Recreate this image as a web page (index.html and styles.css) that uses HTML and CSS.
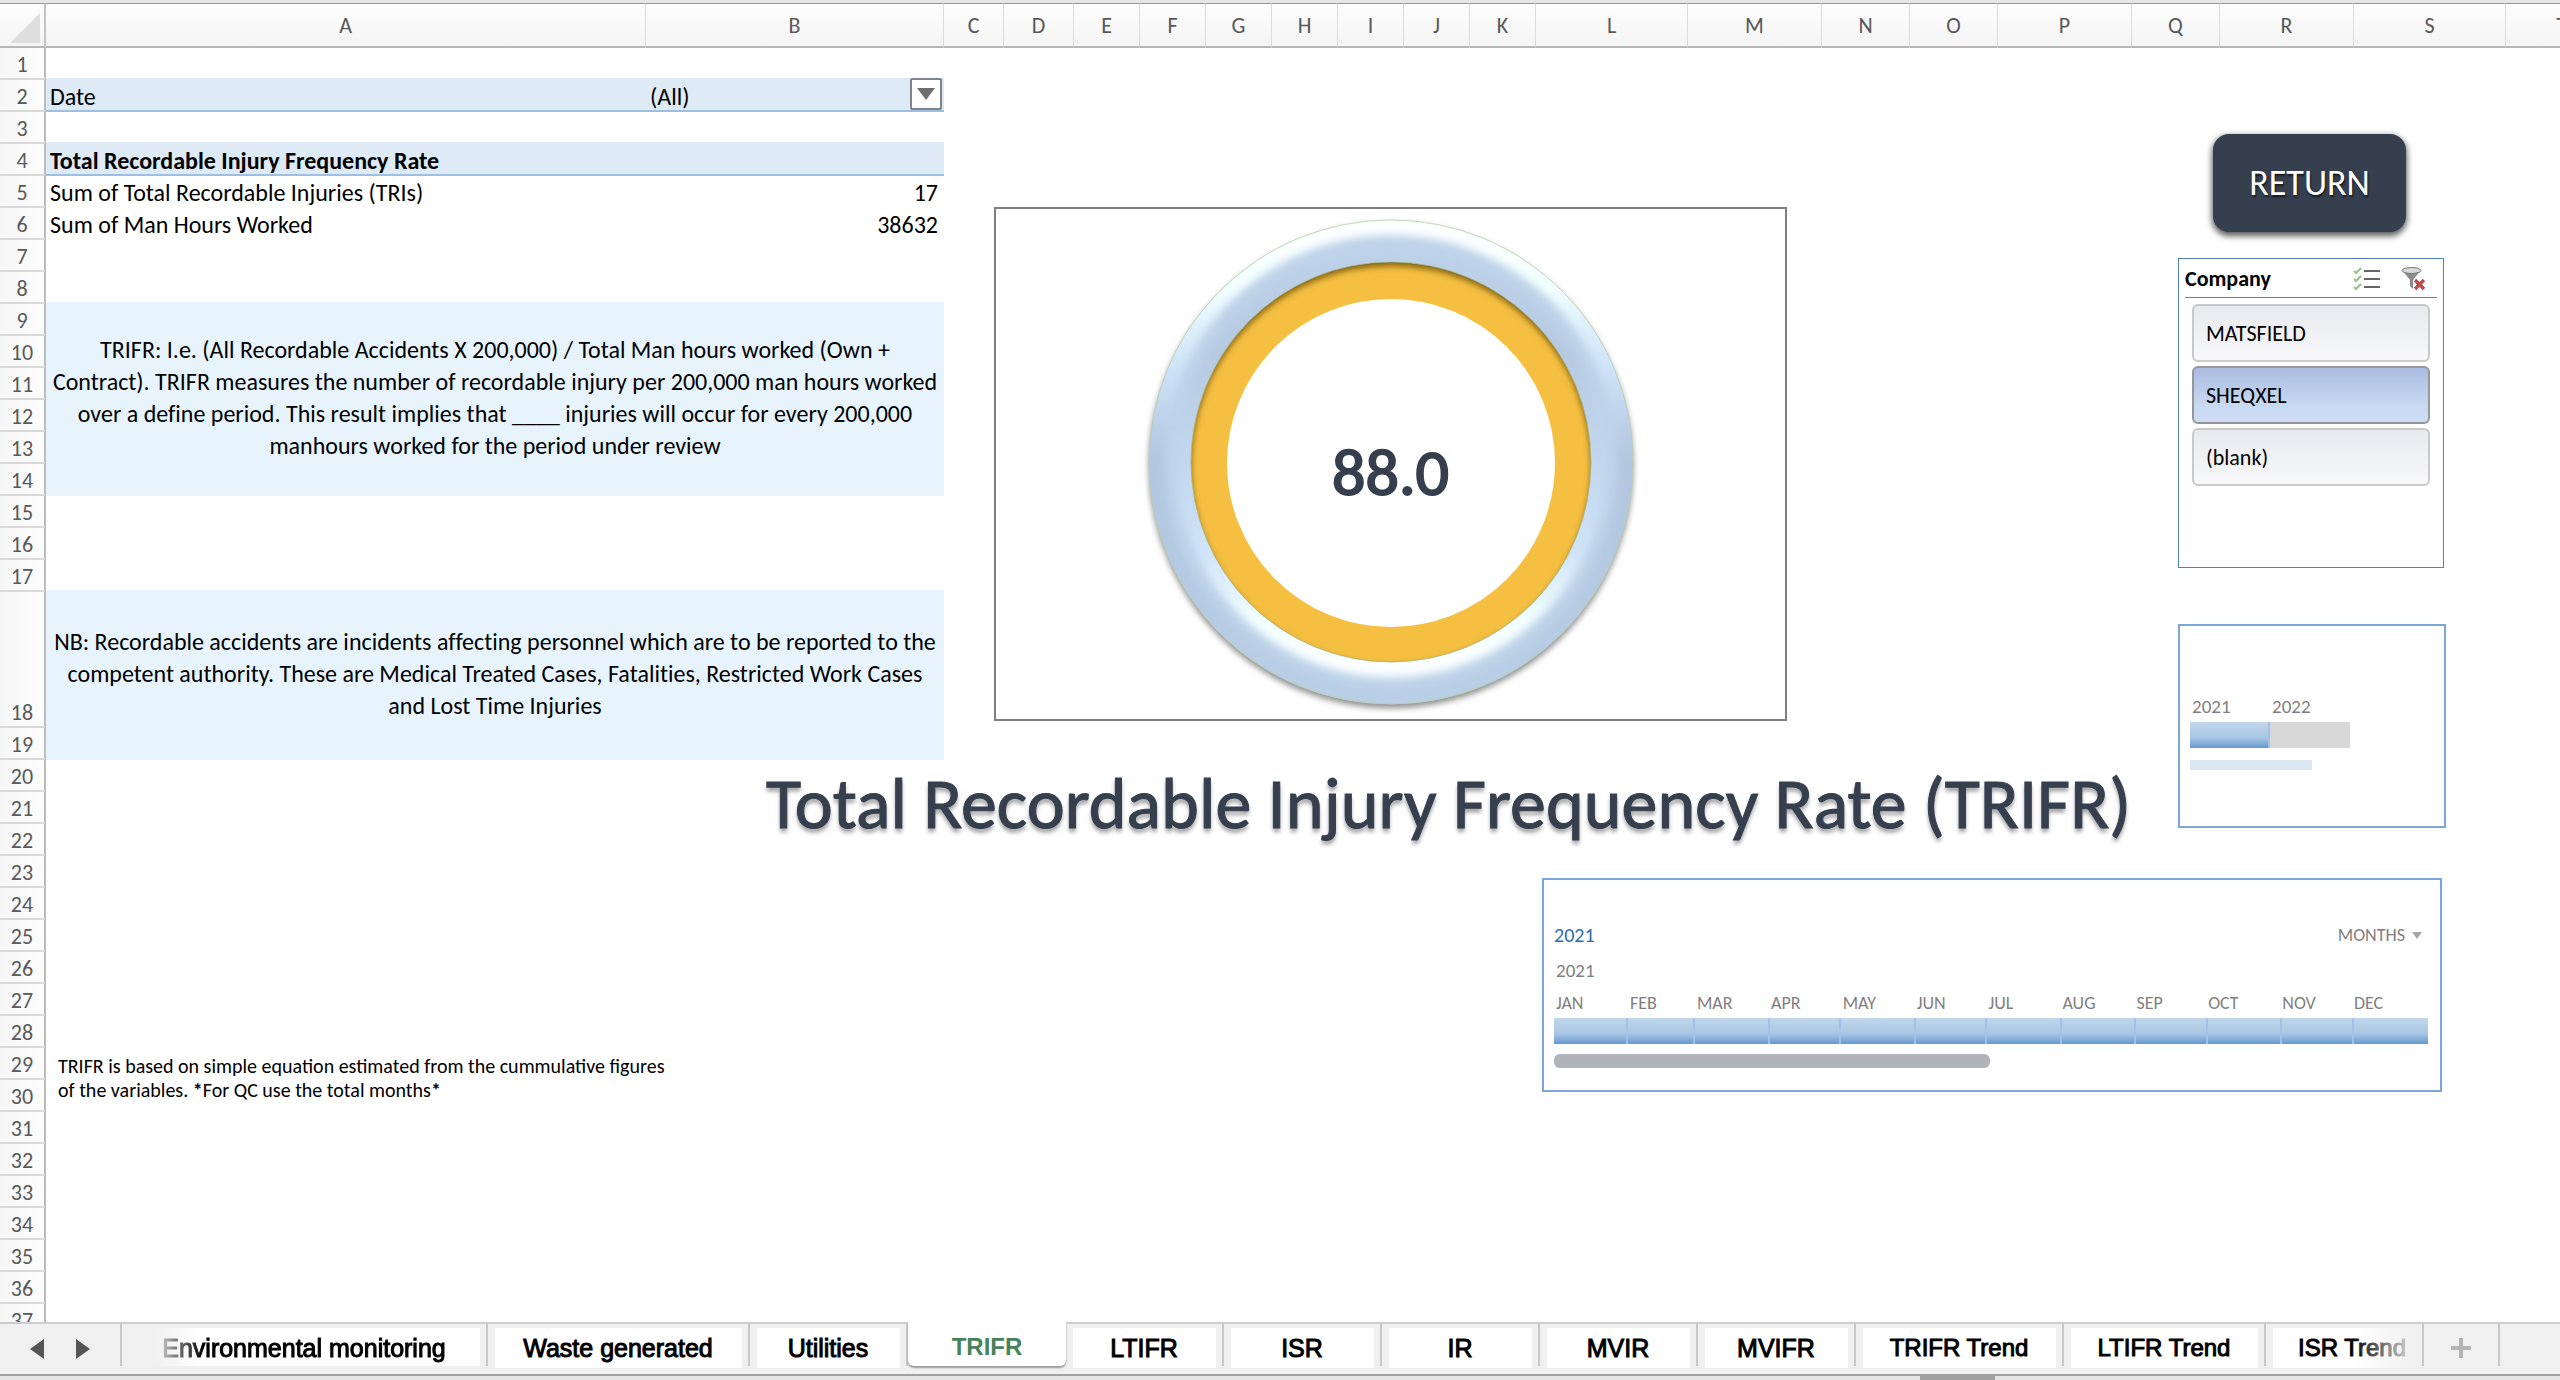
FILE: index.html
```html
<!DOCTYPE html>
<html lang="en">
<head>
<meta charset="utf-8">
<title>TRIFR</title>
<link rel="stylesheet" href="styles.css">
</head>
<body>
<main class="sheet">
  <table class="grid">
    <colgroup>
      <col class="w-head"><col class="w-a"><col class="w-b"><col class="w-c"><col class="w-d"><col class="w-s"><col class="w-s"><col class="w-s"><col class="w-s"><col class="w-s"><col class="w-s"><col class="w-s"><col class="w-xl"><col class="w-l"><col class="w-m"><col class="w-m"><col class="w-l"><col class="w-m"><col class="w-l"><col class="w-xl"><col class="w-t">
    </colgroup>
    <thead>
      <tr>
        <th class="corner"><svg width="44" height="40" viewBox="0 0 44 40"><path d="M40 8V38H10Z" fill="#dedede"/></svg></th>
        <th>A</th><th>B</th><th>C</th><th>D</th><th>E</th><th>F</th><th>G</th><th>H</th><th>I</th><th>J</th><th>K</th><th>L</th><th>M</th><th>N</th><th>O</th><th>P</th><th>Q</th><th>R</th><th>S</th><th>T</th>
      </tr>
    </thead>
    <tbody>
      <tr class="first"><th>1</th><td colspan="20"></td></tr>
      <tr><th>2</th><td class="pivot">Date</td><td class="pivot"><div class="filter">(All)<button class="drop" aria-label="Filter by date"><svg width="18" height="14" viewBox="0 0 18 14"><path d="M0 1H18L9 13Z" fill="#6f6f6f"/></svg></button></div></td><td colspan="18"></td></tr>
      <tr><th>3</th><td colspan="20"></td></tr>
      <tr><th>4</th><td class="pivot strong" colspan="2">Total Recordable Injury Frequency Rate</td><td colspan="18"></td></tr>
      <tr><th>5</th><td>Sum of Total Recordable Injuries (TRIs)</td><td class="num">17</td><td colspan="18"></td></tr>
      <tr><th>6</th><td>Sum of Man Hours Worked</td><td class="num">38632</td><td colspan="18"></td></tr>
      <tr><th>7</th><td colspan="20"></td></tr>
      <tr><th>8</th><td colspan="20"></td></tr>
      <tr><th>9</th><td class="memo" colspan="2" rowspan="6">TRIFR: I.e. (All Recordable Accidents X 200,000) / Total Man hours worked (Own +<br>Contract). TRIFR measures the number of recordable injury per 200,000 man hours worked<br>over a define period. This result implies that ____ injuries will occur for every 200,000<br>manhours worked for the period under review</td><td colspan="18"></td></tr>
      <tr><th>10</th><td colspan="18"></td></tr>
      <tr><th>11</th><td colspan="18"></td></tr>
      <tr><th>12</th><td colspan="18"></td></tr>
      <tr><th>13</th><td colspan="18"></td></tr>
      <tr><th>14</th><td colspan="18"></td></tr>
      <tr><th>15</th><td colspan="20"></td></tr>
      <tr><th>16</th><td colspan="20"></td></tr>
      <tr><th>17</th><td colspan="20"></td></tr>
      <tr class="tall"><th>18</th><td class="memo" colspan="2" rowspan="2">NB: Recordable accidents are incidents affecting personnel which are to be reported to the<br>competent authority. These are Medical Treated Cases, Fatalities, Restricted Work Cases<br>and Lost Time Injuries</td><td colspan="18"></td></tr>
      <tr><th>19</th><td colspan="18"></td></tr>
      <tr><th>20</th><td colspan="20"></td></tr>
      <tr><th>21</th><td colspan="20"></td></tr>
      <tr><th>22</th><td colspan="20"></td></tr>
      <tr><th>23</th><td colspan="20"></td></tr>
      <tr><th>24</th><td colspan="20"></td></tr>
      <tr><th>25</th><td colspan="20"></td></tr>
      <tr><th>26</th><td colspan="20"></td></tr>
      <tr><th>27</th><td colspan="20"></td></tr>
      <tr><th>28</th><td colspan="20"></td></tr>
      <tr><th>29</th><td colspan="20"></td></tr>
      <tr><th>30</th><td colspan="20"></td></tr>
      <tr><th>31</th><td colspan="20"></td></tr>
      <tr><th>32</th><td colspan="20"></td></tr>
      <tr><th>33</th><td colspan="20"></td></tr>
      <tr><th>34</th><td colspan="20"></td></tr>
      <tr><th>35</th><td colspan="20"></td></tr>
      <tr><th>36</th><td colspan="20"></td></tr>
      <tr><th>37</th><td colspan="20"></td></tr>
    </tbody>
  </table>

  <!-- Objects floating over the cells -->
  <figure class="object chart">
    <svg width="789" height="510" viewBox="996 209 789 510">
      <defs>
        <linearGradient id="hiOut" gradientUnits="userSpaceOnUse" x1="0" y1="220" x2="0" y2="704"><stop offset="0" stop-color="#fff"/><stop offset=".14" stop-color="#f2ffff"/><stop offset=".3" stop-color="#d4e8fd" stop-opacity=".8"/><stop offset=".5" stop-color="#abc0da" stop-opacity=".7"/><stop offset=".75" stop-color="#aec4de" stop-opacity=".6"/><stop offset="1" stop-color="#b4cbe3" stop-opacity=".5"/></linearGradient>
        <linearGradient id="hiIn" gradientUnits="userSpaceOnUse" x1="0" y1="680" x2="0" y2="245"><stop offset="0" stop-color="#fff"/><stop offset=".14" stop-color="#f2ffff"/><stop offset=".3" stop-color="#d4e8fd" stop-opacity=".8"/><stop offset=".5" stop-color="#c6dbf2" stop-opacity=".5"/><stop offset=".75" stop-color="#b0c4dc" stop-opacity=".6"/><stop offset="1" stop-color="#bcd2e8" stop-opacity=".5"/></linearGradient>
        <filter id="soft" x="-10%" y="-10%" width="120%" height="120%" color-interpolation-filters="sRGB"><feGaussianBlur stdDeviation="4"/></filter>
        <filter id="drop" x="-10%" y="-10%" width="120%" height="120%"><feGaussianBlur stdDeviation="3"/></filter>
        <clipPath id="ring"><path clip-rule="evenodd" d="M1149 462a242 242 0 1 0 484 0a242 242 0 1 0 -484 0ZM1191 462a200 200 0 1 0 400 0a200 200 0 1 0 -400 0Z"/></clipPath>
        <clipPath id="disc"><circle cx="1391" cy="462" r="200"/></clipPath>
      </defs>
      <circle cx="1391" cy="466" r="221" fill="none" stroke="#000" stroke-opacity=".45" stroke-width="42" filter="url(#drop)"/>
      <circle cx="1391" cy="463" r="182" fill="#fff" stroke="#f5c042" stroke-width="36"/>
      <g clip-path="url(#disc)"><circle cx="1391" cy="466" r="207" fill="none" stroke="#6b4c00" stroke-opacity=".8" stroke-width="14" filter="url(#drop)"/></g>
      <g clip-path="url(#ring)">
        <circle cx="1391" cy="462" r="221" fill="none" stroke="#bfd4ea" stroke-width="44"/>
        <circle cx="1391" cy="462" r="246" fill="none" stroke="url(#hiOut)" stroke-width="38" filter="url(#soft)"/>
        <circle cx="1391" cy="462" r="196" fill="none" stroke="url(#hiIn)" stroke-width="38" filter="url(#soft)"/>
      </g>
      <circle cx="1391" cy="462" r="242" fill="none" stroke="#b9cfaa" stroke-opacity=".8"/>
      <circle cx="1391" cy="462" r="200" fill="none" stroke="#a9b47a" stroke-opacity=".8"/>
    </svg>
    <figcaption class="value">88.0</figcaption>
  </figure>

  <h1 class="object title">Total Recordable Injury Frequency Rate (TRIFR)</h1>

  <p class="object note">TRIFR is based on simple equation estimated from the cummulative figures<br>of the variables. <b>*</b>For QC use the total months<b>*</b></p>

  <button class="object return">RETURN</button>

  <section class="object slicer">
    <header class="slicer-head">
      <h2>Company</h2>
      <button class="icon" aria-label="Multi-select"><svg width="28" height="24" viewBox="0 0 28 24" fill="none"><path d="M1 4l2 2 5-5M1 12l2 2 5-5M1 20l2 2 5-5" stroke="#93c47d" stroke-width="2"/><path d="M11 4H27M11 12H27M11 20H27" stroke="#333" stroke-width="1.6"/></svg></button>
      <button class="icon" aria-label="Clear filter"><svg width="26" height="24" viewBox="0 0 26 24"><path d="M1 3L9 13V19L12 22V13L20 3Z" fill="#8b8b8b"/><ellipse cx="10.500" cy="3.500" rx="9.500" ry="3" fill="#d8d8d8" stroke="#777"/><path d="M14 13l9 9M23 13l-9 9" stroke="#bf4a4a" stroke-width="3.400"/></svg></button>
    </header>
    <div class="slicer-items">
      <button class="item">MATSFIELD</button>
      <button class="item on">SHEQXEL</button>
      <button class="item">(blank)</button>
    </div>
  </section>

  <section class="object years">
    <div class="years-labels"><span>2021</span><span>2022</span></div>
    <div class="years-bar"><i class="sel"></i><i class="unsel"></i></div>
    <div class="years-scroll"></div>
  </section>

  <section class="object timeline">
    <header class="tl-head"><span class="tl-range">2021</span><button class="tl-level">MONTHS <svg width="10" height="7" viewBox="0 0 10 7"><path d="M0 0H10L5 7Z" fill="#a6a6a6"/></svg></button></header>
    <div class="tl-year">2021</div>
    <div class="months labels"><span>JAN</span><span>FEB</span><span>MAR</span><span>APR</span><span>MAY</span><span>JUN</span><span>JUL</span><span>AUG</span><span>SEP</span><span>OCT</span><span>NOV</span><span>DEC</span></div>
    <div class="months bar"><i></i><i></i><i></i><i></i><i></i><i></i><i></i><i></i><i></i><i></i><i></i><i></i></div>
    <div class="tl-scroll"></div>
  </section>
</main>

<nav class="tabs">
  <div class="arrows">
    <button aria-label="Previous sheet"><svg width="14" height="20" viewBox="0 0 14 20"><path d="M14 0V20L0 10Z" fill="#555"/></svg></button>
    <button aria-label="Next sheet"><svg width="14" height="20" viewBox="0 0 14 20"><path d="M0 0V20L14 10Z" fill="#555"/></svg></button>
  </div>
  <a class="tab t-env" href="#env">Environmental monitoring</a>
  <a class="tab t-waste" href="#waste">Waste generated</a>
  <a class="tab" href="#utilities">Utilities</a>
  <a class="tab active" href="#trifr">TRIFR</a>
  <a class="tab" href="#ltifr">LTIFR</a>
  <a class="tab" href="#isr">ISR</a>
  <a class="tab" href="#ir">IR</a>
  <a class="tab" href="#mvir">MVIR</a>
  <a class="tab" href="#mvifr">MVIFR</a>
  <a class="tab t-trend" href="#trifr-trend">TRIFR Trend</a>
  <a class="tab t-trend2" href="#ltifr-trend">LTIFR Trend</a>
  <a class="tab t-last" href="#isr-trend">ISR Trend</a>
  <button class="add" aria-label="Add sheet"><svg width="20" height="20" viewBox="0 0 20 20"><path d="M10 0V20M0 10H20" stroke="#b3b3b3" stroke-width="4"/></svg></button>
</nav>
<div class="status"><div class="thumb"></div></div>
</body>
</html>
```
FILE: styles.css
```css
* { box-sizing: border-box; }

body {
  margin: 0;
  height: 100vh;
  display: flex;
  flex-direction: column;
  overflow: hidden;
  background: #fff;
  color: #000;
  font-family: Calibri, Carlito, Lato, sans-serif;
  font-size: 22px;
}

button { font: inherit; color: inherit; border: 0; background: none; padding: 0; }
h1, h2, p, figure { margin: 0; }

.sheet {
  position: relative;
  flex: 1;
  min-height: 0;
  overflow: hidden;
  border-top: 3px solid #e6e6e6;
}

/* Cells */
.grid { table-layout: fixed; border-collapse: separate; border-spacing: 0; width: 2618px; line-height: 26px; font-variant-ligatures: none; }
.w-head { width: 46px; }
.w-a { width: 600px; }
.w-b { width: 298px; }
.w-c { width: 60px; }
.w-d { width: 70px; }
.w-s { width: 66px; }
.w-m { width: 88px; }
.w-l { width: 134px; }
.w-xl { width: 152px; }
.w-t { width: 112px; }

.grid th { font-weight: 400; color: #595959; padding: 0; }
.grid thead th {
  height: 45px;
  padding-top: 2px;
  border-top: 1px solid #999;
  border-bottom: 2px solid #b7b7b7;
  border-right: 1px solid #dcdcdc;
  background: linear-gradient(#fdfdfd, #f5f5f5);
}
.grid thead .corner { border-right: 2px solid #c4c4c4; line-height: 0; padding: 0; }
tbody tr { height: 32px; }
tbody .first { height: 30px; }
tbody .tall { height: 136px; }
tbody th {
  border-right: 2px solid #bcbcbc;
  border-top: 2px solid #dadada;
  background: linear-gradient(90deg, #f6f6f6, #fdfdfd);
  vertical-align: bottom;
}
tbody .first th { border-top: 0; }
tbody td { padding: 4px 6px 0 4px; height: 30px; vertical-align: bottom; white-space: nowrap; font-size: 24px; }
td.pivot { background: #deeaf6; box-shadow: 0 2px #9dbfe4; }
td.strong { font-weight: 700; }
td.num { text-align: right; }
td.memo { background: #e7f4fe; box-shadow: 0 2px #e7f4fe; text-align: center; vertical-align: middle; line-height: 32px; padding: 0; }
.filter { position: relative; }
.drop {
  position: absolute;
  right: -4px;
  bottom: 0;
  width: 32px;
  height: 32px;
  border: 2px solid #808488;
  border-radius: 2px;
  background: #fff;
  display: grid;
  place-items: center;
}

/* Floating objects */
.object { position: absolute; }
.chart { left: 994px; top: 204px; width: 793px; height: 514px; border: 2px solid #7f7f7f; background: #fff; }
.chart svg { display: block; }
.value {
  position: absolute;
  inset: 16px 0 0;
  display: grid;
  place-items: center;
  color: #363f4e;
  font-size: 66px;
  -webkit-text-stroke: 2px #363f4e;
}
.title {
  left: 766px;
  top: 756px;
  font-size: 72px;
  line-height: 88px;
  font-weight: 400;
  font-variant-ligatures: none;
  color: #363f4e;
  white-space: nowrap;
  -webkit-text-stroke: 1px #363f4e;
  text-shadow: 0 4px 4px rgba(0, 0, 0, .4);
}
.note { left: 58px; top: 1051px; font-size: 20px; line-height: 24px; white-space: nowrap; }

.return {
  left: 2213px;
  top: 131px;
  width: 193px;
  height: 98px;
  border-radius: 16px;
  background: #363f4e;
  color: #fff;
  font-size: 36px;
  text-shadow: 1px 2px 2px rgba(0, 0, 0, .6);
  box-shadow: 0 3px 6px 1px rgba(0, 0, 0, .65);
}

.slicer { left: 2178px; top: 255px; width: 266px; height: 310px; border: 1px solid #4f81bd; background: #fff; padding: 0 6px; }
.slicer-head { display: flex; align-items: center; gap: 20px; height: 39px; border-bottom: 1px solid #4f81bd; padding: 2px 10px 0 0; }
.slicer-head h2 { flex: 1; font-size: 22px; line-height: 28px; }
.icon { line-height: 0; }
.slicer-items { display: flex; flex-direction: column; gap: 4px; padding: 6px 7px 0; }
.item {
  height: 58px;
  border: 2px solid #c9c9c9;
  border-radius: 6px;
  background: linear-gradient(#e9eaed, #f8f8fb);
  text-align: left;
  padding: 0 0 0 12px;
}
.item.on { border-color: #979797; background: linear-gradient(#a9bce0, #c8d9f2 70%, #ccddf4); }

.years { left: 2178px; top: 621px; width: 268px; height: 204px; border: 2px solid #7ba8da; background: #fff; padding: 69px 10px 0; color: #7f7f7f; font-size: 19px; line-height: 24px; }
.years-labels { display: grid; grid-template-columns: 80px 80px; padding-left: 2px; }
.years-bar { display: grid; grid-template-columns: 80px 80px; height: 26px; margin-top: 3px; }
.sel { border-right: 2px solid #a3c1e6; background: linear-gradient(#c1d7ec, #a9c6e3 60%, #6699d0); }
.unsel { background: #d8d8d8; }
.years-scroll { width: 122px; height: 10px; margin-top: 12px; background: #dae6f2; }

.timeline { left: 1542px; top: 875px; width: 900px; height: 214px; border: 2px solid #7ba8da; background: #fff; padding: 43px 12px 0 10px; color: #7f7f7f; font-size: 18px; line-height: 24px; }
.tl-head { display: flex; justify-content: space-between; padding-right: 6px; }
.tl-range { color: #2e6db4; font-size: 20px; }
.tl-level { display: flex; align-items: center; gap: 7px; }
.tl-year { padding: 12px 2px 8px; font-size: 19px; }
.months { display: grid; grid-template-columns: 31fr 28fr 31fr 30fr 31fr 30fr 31fr 31fr 30fr 31fr 30fr 31fr; }
.labels { padding-left: 2px; }
.bar { height: 26px; margin-top: 3px; background: linear-gradient(#c1d7ec, #a9c6e3 60%, #6699d0); }
.bar i { border-right: 2px solid #a3c1e6; }
.bar i:last-child { border-right: 0; }
.tl-scroll { width: 436px; height: 14px; margin-top: 10px; border-radius: 6px; background: #b0b3b7; }

/* Sheet tabs */
.tabs {
  display: flex;
  height: 52px;
  flex: none;
  border-top: 2px solid #cdcdcd;
  background: #f0f0f0;
  font-family: "Liberation Sans", Arial, sans-serif;
  font-size: 25px;
}
.arrows { width: 122px; height: 42px; display: flex; gap: 32px; align-items: center; padding: 8px 0 0 30px; border-right: 2px solid #c8c8c8; }
.arrows button { line-height: 0; }
.tab {
  width: 158px;
  height: 42px;
  border-right: 2px solid #c8c8c8;
  color: #000;
  text-decoration: none;
  display: flex;
  position: relative;
  z-index: 0;
  align-items: center;
  justify-content: center;
  padding-top: 6px;
  white-space: nowrap;
  -webkit-text-stroke: 1px;
}
.tab::before { content: ""; position: absolute; inset: 4px 6px -2px 7px; background: #fff; z-index: -1; }
.t-env { width: 366px; -webkit-mask-image: linear-gradient(90deg, transparent 8%, #000 22%); }
.t-waste { width: 262px; }
.t-trend { width: 208px; font-size: 24px; }
.t-trend2 { width: 202px; font-size: 24px; }
.t-last { padding-left: 16px; font-size: 24px; }
.t-last::after { content: ""; position: absolute; inset: 4px 0 -2px 50%; background: linear-gradient(90deg, transparent 10%, #f0f0f0 95%); }
.tab.active {
  height: 44px;
  margin-top: -2px;
  background: #fff;
  color: #47825a;
  font-size: 24px;
  font-weight: 700;
  -webkit-text-stroke: 0;
  border-right: 0;
  border-radius: 0 0 6px 6px;
  box-shadow: 0 2px 2px #999;
}
.tab.active::before { content: none; }
.add { width: 76px; height: 42px; border-right: 2px solid #c8c8c8; padding-top: 8px; }

.status { height: 6px; flex: none; border-top: 2px solid #a0a0a0; background: #e4e4e4; }
.thumb { width: 75px; height: 4px; margin-left: 75%; background: #a0a0a0; }
```
